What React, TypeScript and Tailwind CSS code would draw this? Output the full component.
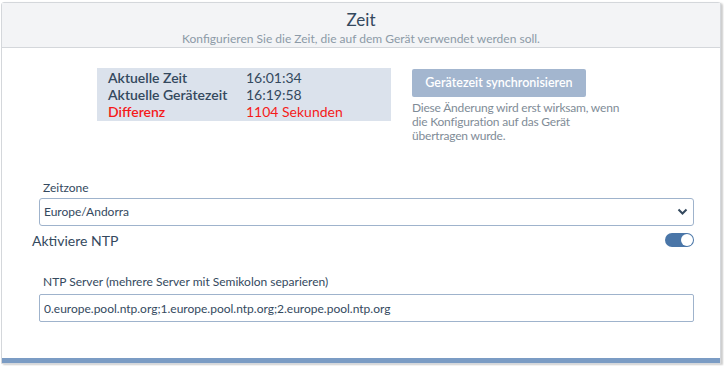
import React, { useState } from 'react';

const font = { fontFamily: 'Lato, "Noto Sans", sans-serif' };

const InfoRow = ({ label, value, danger }: { label: string; value: string; danger?: boolean }) => (
  <div className={`flex h-[17px] items-center ${danger ? 'text-[#f51a1a]' : 'text-[#34495e]'}`}>
    <span className="w-[138px] font-semibold">{label}</span>
    <span>{value}</span>
  </div>
);

export default function App() {
  const [ntp, setNtp] = useState(true);

  return (
    <div className="w-[724px] h-[366px] bg-white" style={font}>
      <div className="ml-[1px] mt-[2px] w-[720px] h-[362px] flex flex-col border border-[#d4d7db] rounded-t-[3px] shadow-[2px_1px_2px_rgba(0,0,0,0.2)] bg-white">
        {/* header */}
        <div className="h-[45px] shrink-0 bg-[#f3f4f6] border-b border-[#d4d7db] flex flex-col items-center pt-[6px]">
          <div className="text-[17px] leading-[22px] text-[#34495e]">Zeit</div>
          <div className="text-[12px] leading-[15px] text-[#8c9aa7]">
            Konfigurieren Sie die Zeit, die auf dem Gerät verwendet werden soll.
          </div>
        </div>

        {/* body */}
        <div className="flex-1 flex flex-col">
          <div className="flex mt-[20px] pl-[95px]">
            <div className="w-[294px] h-[53px] bg-[#dbe2ec] pl-[11px] pt-[1px] text-[14px]">
              <InfoRow label="Aktuelle Zeit" value="16:01:34" />
              <InfoRow label="Aktuelle Gerätezeit" value="16:19:58" />
              <InfoRow label="Differenz" value="1104 Sekunden" danger />
            </div>
            <div className="ml-[21px] w-[215px]">
              <button className="mt-[1px] w-[174px] h-[28px] rounded-[2px] bg-[#a3b6cf] text-white text-[12.5px] font-semibold">
                Gerätezeit synchronisieren
              </button>
              <p className="mt-[4px] text-[12px] tracking-[-0.2px] leading-[14px] text-[#7f8c97]">
                Diese Änderung wird erst wirksam, wenn
                <br />
                die Konfiguration auf das Gerät
                <br />
                übertragen wurde.
              </p>
            </div>
          </div>

          <div className="mt-[37px] pl-[37px] pr-[26px]">
            <label className="block pl-[4px] text-[12px] leading-[16px] text-[#34495e]">Zeitzone</label>
            <div className="relative mt-[2px]">
              <select className="w-full h-[28px] appearance-none border border-[#9fb3cc] rounded-[3px] bg-white pl-[4px] text-[12px] text-[#34495e] outline-none">
                <option>Europe/Andorra</option>
              </select>
              <svg className="absolute right-[6px] top-[10px] pointer-events-none" width="11" height="8" viewBox="0 0 11 8">
                <path d="M1.5 1.5 L5.5 5.5 L9.5 1.5" stroke="#34495e" strokeWidth="2" fill="none" />
              </svg>
            </div>
          </div>

          <div className="flex items-center justify-between pl-[30px] pr-[26px] mt-[5px] h-[18px]">
            <span className="text-[14px] text-[#34495e]">Aktiviere NTP</span>
            <button
              onClick={() => setNtp(!ntp)}
              className={`w-[29px] h-[14px] rounded-full flex items-center px-[1px] ${ntp ? 'bg-[#4a76a8] justify-end' : 'bg-[#c8d1dc] justify-start'}`}
            >
              <span className="w-[12px] h-[12px] rounded-full bg-white" />
            </button>
          </div>

          <div className="mt-[25px] pl-[37px] pr-[26px]">
            <label className="block pl-[4px] text-[12px] leading-[16px] text-[#34495e]">
              NTP Server (mehrere Server mit Semikolon separieren)
            </label>
            <input
              className="mt-[4px] w-full h-[28px] border border-[#9fb3cc] rounded-[2px] pl-[4px] text-[12px] text-[#34495e] outline-none"
              defaultValue="0.europe.pool.ntp.org;1.europe.pool.ntp.org;2.europe.pool.ntp.org"
            />
          </div>
        </div>

        <div className="h-[5px] shrink-0 bg-[#7b9cc4]" />
      </div>
    </div>
  );
}
